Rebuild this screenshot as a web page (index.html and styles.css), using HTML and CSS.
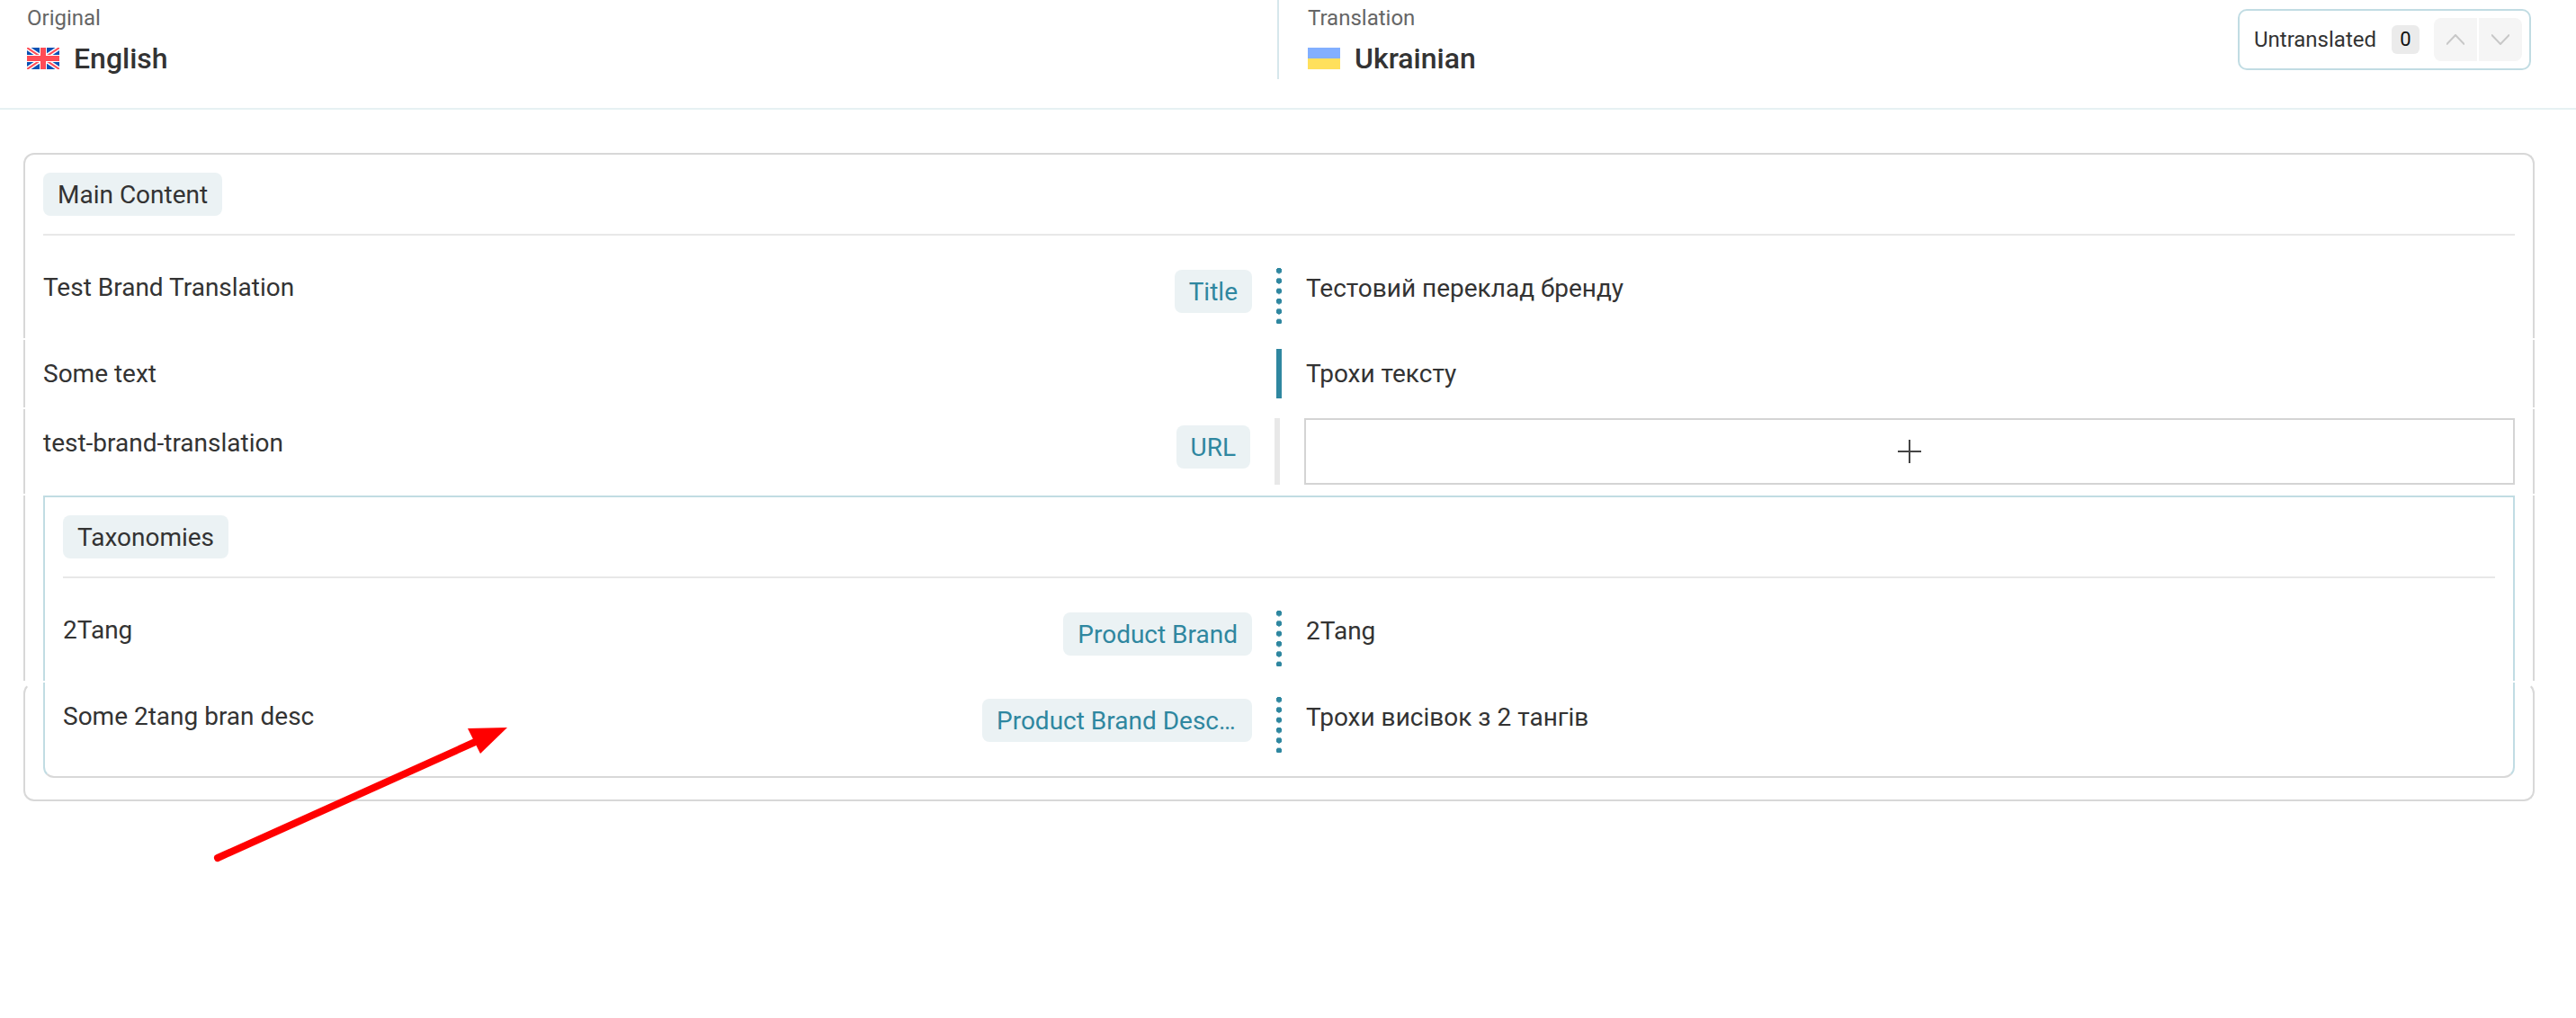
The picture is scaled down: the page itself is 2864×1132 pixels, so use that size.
FILE: index.html
```html
<!DOCTYPE html>
<html lang="en">
<head>
<meta charset="utf-8">
<title>Translation</title>
<link rel="stylesheet" href="styles.css">
</head>
<body>
<header class="topbar">
  <div class="lang lang-original">
    <div class="lang-label">Original</div>
    <div class="lang-name">
      <svg class="flag" viewBox="0 0 36 24"><rect width="36" height="24" fill="#0b50b3"/><path d="M0 0L36 24M36 0L0 24" stroke="#fff" stroke-width="5"/><path d="M0 0L36 24M36 0L0 24" stroke="#ff4b55" stroke-width="2"/><rect x="14" width="8" height="24" fill="#fff"/><rect y="8" width="36" height="8" fill="#fff"/><rect x="15" width="6" height="24" fill="#ff4b55"/><rect y="9" width="36" height="6" fill="#ff4b55"/></svg>
      <span>English</span>
    </div>
  </div>
  <div class="lang lang-translation">
    <div class="lang-label">Translation</div>
    <div class="lang-name">
      <svg class="flag" viewBox="0 0 36 24"><rect width="36" height="12" fill="#82afff"/><rect y="12" width="36" height="12" fill="#ffe05c"/></svg>
      <span>Ukrainian</span>
    </div>
  </div>
  <div class="pager">
    <span class="pager-label">Untranslated</span>
    <span class="pager-count">0</span>
    <span class="pager-btns">
      <span class="pager-btn"><svg width="20" height="12" viewBox="0 0 20 12"><path d="M0 11.500L10 1L20 11.500" fill="none" stroke="#c8c8c8" stroke-width="2"/></svg></span>
      <span class="pager-btn"><svg width="20" height="12" viewBox="0 0 20 12"><path d="M0 .5L10 11L20 .5" fill="none" stroke="#c8c8c8" stroke-width="2"/></svg></span>
    </span>
  </div>
</header>

<main class="page">
  <section class="seg seg-first">
    <div class="group-head"><span class="group-tag">Main Content</span></div>
    <div class="row row-dotted row-main-first">
      <div class="cell-left"><span class="text">Test Brand Translation</span><span class="tag">Title</span></div>
      <div class="bar bar-dotted"></div>
      <div class="cell-right"><span class="text">Тестовий переклад бренду</span></div>
    </div>
  </section>
  <section class="seg">
    <div class="row row-solid">
      <div class="cell-left"><span class="text">Some text</span></div>
      <div class="bar bar-solid"></div>
      <div class="cell-right"><span class="text">Трохи тексту</span></div>
    </div>
  </section>
  <section class="seg">
    <div class="row row-empty">
      <div class="cell-left"><span class="text">test-brand-translation</span><span class="tag">URL</span></div>
      <div class="bar bar-empty"></div>
      <div class="cell-right"><div class="add-box"><svg width="26" height="26" viewBox="0 0 26 26"><path d="M13 0V26M0 13H26" stroke="#444" stroke-width="2"/></svg></div></div>
    </div>
  </section>
  <section class="seg">
    <div class="tax tax-first">
      <div class="group-head"><span class="group-tag">Taxonomies</span></div>
      <div class="row row-dotted row-main-first">
        <div class="cell-left"><span class="text">2Tang</span><span class="tag">Product Brand</span></div>
        <div class="bar bar-dotted"></div>
        <div class="cell-right"><span class="text">2Tang</span></div>
      </div>
    </div>
  </section>
  <section class="seg seg-last">
    <div class="tax tax-last">
      <div class="row row-dotted row-tax-last">
        <div class="cell-left"><span class="text">Some 2tang bran desc</span><span class="tag tag-clipped">Product Brand Desc…</span></div>
        <div class="bar bar-dotted"></div>
        <div class="cell-right"><span class="text">Трохи висівок з 2 тангів</span></div>
      </div>
    </div>
  </section>
</main>

<svg class="arrow" width="600" height="200" viewBox="0 0 600 200"><path d="M242 154L535 22" stroke="#f00" stroke-width="8" stroke-linecap="round" fill="none"/><polygon points="564,9 520,10 534,38" fill="#f00"/></svg>
</body>
</html>
```
FILE: styles.css
```css
* { box-sizing: border-box; }
html, body { margin: 0; background: #fff; }
body {
  position: relative;
  min-height: 1132px;
  font-family: Roboto, "Noto Sans", sans-serif;
  color: #333;
  font-size: 28px;
}

.topbar {
  height: 122px;
  display: flex;
  border-bottom: 2px solid #e6f1f3;
  position: relative;
}
.lang { padding-top: 4px; }
.lang-original { flex: none; width: 1422px; height: 88px; padding-left: 30px; border-right: 2px solid #d6e7ec; }
.lang-translation { padding-left: 32px; flex: 1; }
.lang-label { font-size: 24px; line-height: 32px; color: #666; }
.lang-name { display: flex; align-items: center; gap: 16px; font-size: 32px; font-weight: 500; line-height: 40px; margin-top: 9px; color: #333; }
.flag { width: 36px; height: 24px; flex: none; }

.pager {
  display: flex;
  align-items: center;
  height: 68px;
  margin: 10px 50px 0 0;
  padding: 0 8px 0 16px;
  border: 2px solid #c1dce3;
  border-radius: 10px;
}
.pager-label { font-size: 24px; }
.pager-count { margin-left: 17px; min-width: 31px; height: 32px; line-height: 32px; text-align: center; background: #ebebeb; border-radius: 6px; font-size: 22px; color: #111; }
.pager-btns { display: flex; gap: 2px; margin-left: 16px; border-radius: 8px; overflow: hidden; }
.pager-btn { width: 48px; height: 48px; background: #f5f5f5; display: flex; align-items: center; justify-content: center; }

.page { padding: 48px 46px 0 26px; display: flex; flex-direction: column; gap: 2px; }
.seg { border-left: 2px solid #d8d8d8; border-right: 2px solid #d8d8d8; padding: 0 20px; }
.seg-first { border-top: 2px solid #d8d8d8; border-radius: 12px 12px 0 0; padding-top: 20px; }
.seg-last { border-top: 2px solid transparent; border-bottom: 2px solid #d8d8d8; border-radius: 12px; padding-bottom: 24px; }

.group-head { display: flex; padding-bottom: 20px; border-bottom: 2px solid #e8e8e8; }
.group-tag { height: 48px; line-height: 50px; padding: 0 16px; background: #ebf2f4; border-radius: 8px; font-size: 28px; }

.row { display: grid; grid-template-columns: minmax(0, 1fr) 6px minmax(0, 1fr); column-gap: 27px; align-items: start; }
.cell-left { display: flex; justify-content: space-between; align-items: flex-start; min-width: 0; }
.cell-right { min-width: 0; }
.text { display: block; line-height: 36px; font-size: 28px; white-space: nowrap; }
.tag { flex: none; height: 48px; line-height: 50px; padding: 0 16px; background: #ebf2f4; border-radius: 8px; color: #2f87a0; font-size: 28px; white-space: nowrap; }
.tag-clipped { width: 300px; }
.bar { width: 6px; }
.bar-dotted { height: 62px; background: radial-gradient(circle at 3px 3px, #2f87a0 3px, transparent 3.5px) 0 0 / 6px 11.33px repeat-y; }
.bar-solid { height: 55px; background: #2f87a0; }
.bar-empty { height: 74px; background: #e8e8e8; margin-left: -2px; }

.row-dotted { padding: 16px 0 16px; }
.row-main-first { padding-top: 36px; }
.row-dotted .tag { margin-top: 2px; }
.row-dotted .cell-left .text { margin-top: 4px; }
.row-dotted .cell-right .text { margin-top: 5px; }
.row-solid { padding: 10px 0; }
.row-solid .text { margin-top: 10px; }
.row-empty { padding: 10px 0; }
.row-empty .cell-left .text { margin-top: 10px; }
.row-empty .tag { margin: 8px 2px 0 0; }
.add-box { height: 74px; margin-left: -2px; border: 2px solid #d4d4d4; display: flex; align-items: center; justify-content: center; }

.tax { border-left: 2px solid #c1dce3; border-right: 2px solid #c1dce3; padding: 0 20px; }
.tax-first { border-top: 2px solid #c1dce3; padding-top: 20px; }
.tax-last { margin-top: -2px; border-bottom: 2px solid #d8d8d8; border-radius: 0 0 12px 12px; }
.row-tax-last { padding-bottom: 26px; }

.arrow { position: absolute; left: 0; top: 800px; pointer-events: none; }
```
